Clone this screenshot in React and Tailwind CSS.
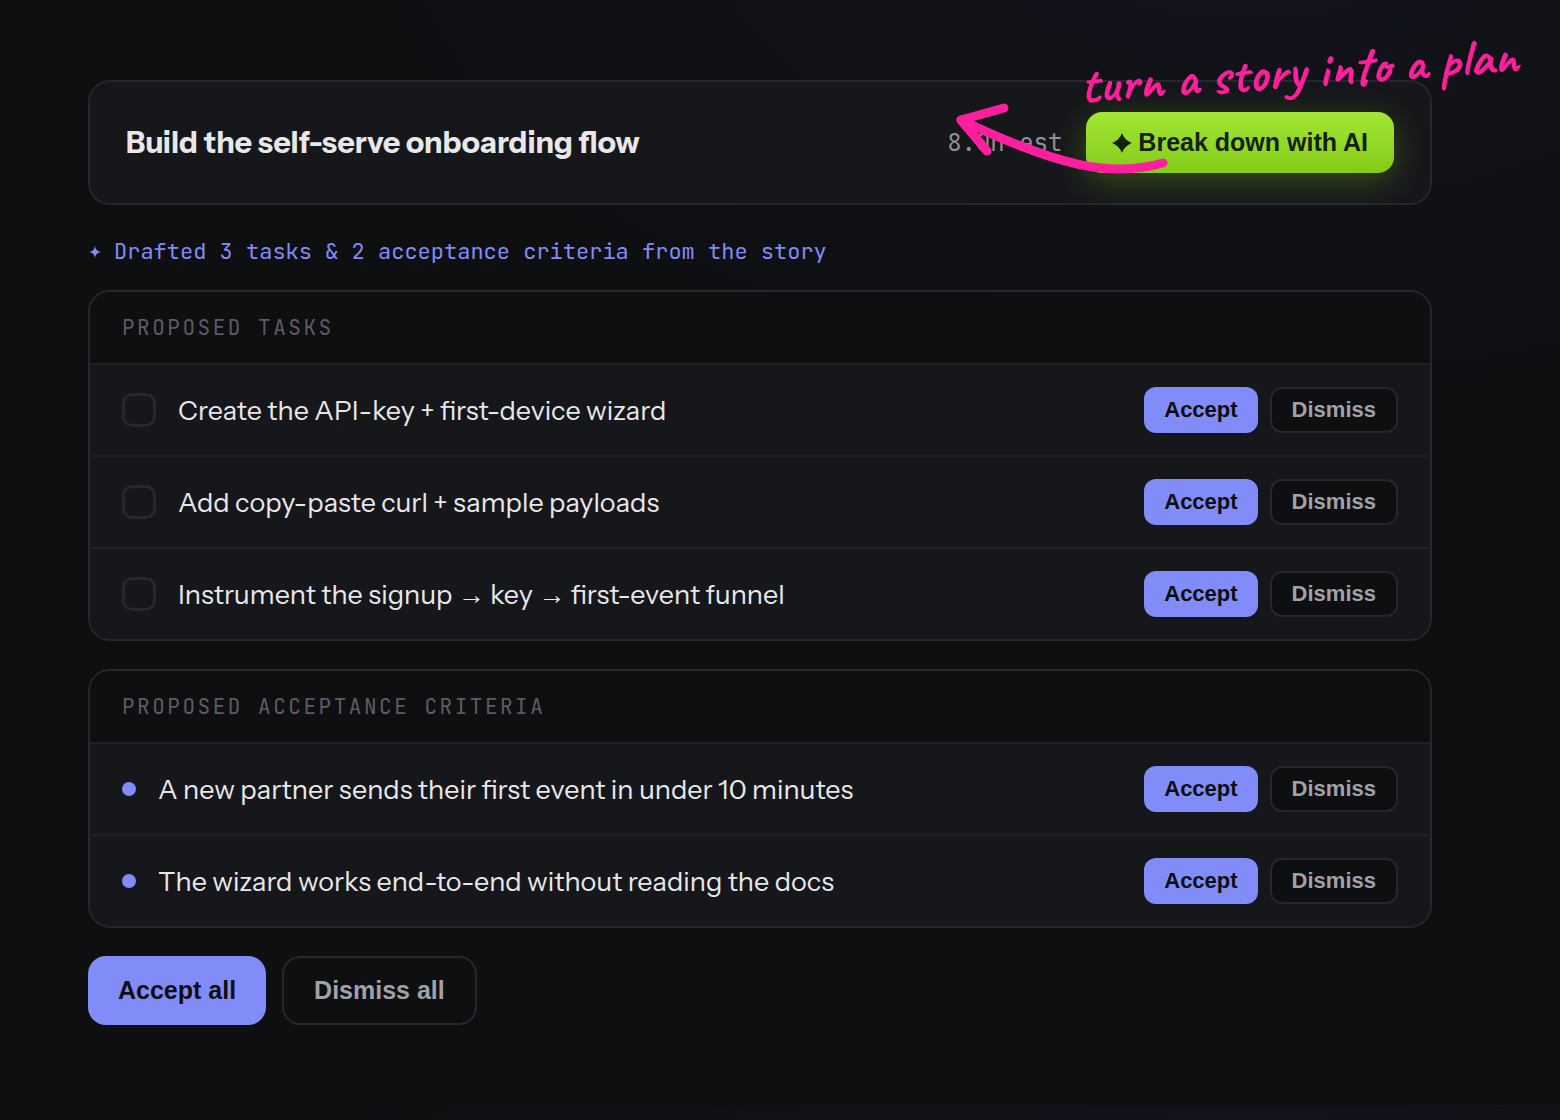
import React, { useState } from 'react';

const TASKS = [
  'Create the API-key + first-device wizard',
  'Add copy-paste curl + sample payloads',
  'Instrument the signup → key → first-event funnel',
];

const CRITERIA = [
  'A new partner sends their first event in under 10 minutes',
  'The wizard works end-to-end without reading the docs',
];

// arrows are set in the plain bold sans so their heads stay solid
const withArrows = (text) =>
  text.split(/(→)/).map((part, i) =>
    part === '→' ? (
      <span key={i} className="font-['Liberation_Sans',sans-serif] font-bold">
        {part}
      </span>
    ) : (
      part
    )
  );

const RowActions = () => (
  <div className="ml-auto flex shrink-0 gap-3 font-['Liberation_Sans',sans-serif] text-[22px] font-bold">
    <button type="button" className="h-[46px] rounded-xl bg-[#818cf8] px-5 pb-0.5 text-[#0e0f11]">
      Accept
    </button>
    <button
      type="button"
      className="h-[46px] rounded-xl border-2 border-[#26272e] bg-[#0e0f11] px-5 pb-0.5 text-[#a1a1aa]"
    >
      Dismiss
    </button>
  </div>
);

const Panel = ({ title, children }) => (
  <section className="mb-7 overflow-hidden rounded-[22px] border-2 border-[#26272e] bg-[#16171b]">
    <h2 className="bg-[#0e0f11] px-8 pt-5 pb-[19px] font-['JetBrains_Mono','DejaVu_Sans_Mono',monospace] text-[21px] leading-8 tracking-[0.12em] text-[#5b5c66] uppercase">
      {title}
    </h2>
    <ul>{children}</ul>
  </section>
);

const TaskRow = ({ id, text }) => {
  const [checked, setChecked] = useState(false);

  return (
    <li className="flex items-center border-t-2 border-[#1f2026] px-8 py-[22px]">
      <input
        id={id}
        type="checkbox"
        checked={checked}
        onChange={(e) => setChecked(e.target.checked)}
        className="size-[34px] shrink-0 appearance-none rounded-[10px] border-3 border-[#26272e] checked:bg-[#818cf8]"
      />
      <label htmlFor={id} className="ml-[22px] pt-0.5 text-[27px] leading-9">
        {withArrows(text)}
      </label>
      <RowActions />
    </li>
  );
};

const CriterionRow = ({ text }) => (
  <li className="flex items-center border-t-2 border-[#1f2026] px-8 py-[22px]">
    <span className="size-3.5 shrink-0 rounded-full bg-[#818cf8]" />
    <span className="ml-[22px] pt-0.5 text-[27px] leading-9">{text}</span>
    <RowActions />
  </li>
);

// hand-drawn note that points at the story card
const Annotation = () => (
  <div className="pointer-events-none absolute -top-[50px] -right-24 h-[150px] w-[600px] text-[#ff1f9c]">
    <p className="absolute top-1 right-2 -rotate-4 font-['Caveat','Lato',cursive] text-[54px] leading-[68px] font-bold whitespace-nowrap">
      turn a story into a plan
    </p>
    <svg
      viewBox="0 0 230 80"
      fill="none"
      stroke="currentColor"
      strokeWidth="9"
      strokeLinecap="round"
      strokeLinejoin="round"
      className="absolute top-[58px] left-3.5 h-20 w-[230px] overflow-visible"
    >
      <path d="M223 73 C170 88 118 76 21 30" />
      <path d="M64 18 L21 30 L47 61" />
    </svg>
  </div>
);

const App = () => {
  return (
    <main className="min-h-screen overflow-hidden bg-[#0e0f11] bg-[radial-gradient(1560px_900px_at_80%_-10%,rgba(99,102,241,0.055),transparent_60%)] bg-[length:100%_1105px] pt-20 pr-32 pb-20 pl-[88px] font-['Instrument_Sans','Inter',sans-serif] text-[#e8e8ea]">
      <header className="relative flex items-center rounded-[22px] border-2 border-[#26272e] bg-[#16171b] px-9 py-[30px]">
        <h1 className="text-[30px] leading-9 font-bold">Build the self-serve onboarding flow</h1>
        <span className="ml-auto font-['JetBrains_Mono','DejaVu_Sans_Mono',monospace] text-[24px] text-[#8f9098]">
          8.0h est
        </span>
        <button
          type="button"
          className="ml-6 flex h-[61px] items-center gap-1.5 rounded-2xl bg-linear-to-b from-[#a3e635] to-[#84cc16] px-[26px] font-['Liberation_Sans',sans-serif] text-[25px] font-bold text-[#16210a] shadow-[0_8px_32px_rgba(132,204,22,0.3)]"
        >
          <svg viewBox="0 0 20 20" fill="currentColor" className="size-5">
            <path d="M10 0 C12 5 15 8 20 10 C15 12 12 15 10 20 C8 15 5 12 0 10 C5 8 8 5 10 0 Z" />
          </svg>
          Break down with AI
        </button>
        <Annotation />
      </header>

      <p className="mt-[29px] mb-5 flex items-center gap-3 font-['JetBrains_Mono','DejaVu_Sans_Mono',monospace] text-[22px] leading-9 text-[#818cf8]">
        <svg viewBox="0 0 14 14" fill="currentColor" className="size-3.5">
          <path d="M7 1 C7.500 4.500 9.500 6.500 13 7 C9.500 7.500 7.500 9.500 7 13 C6.500 9.500 4.500 7.500 1 7 C4.500 6.500 6.500 4.500 7 1 Z" />
        </svg>
        Drafted 3 tasks &amp; 2 acceptance criteria from the story
      </p>

      <Panel title="Proposed tasks">
        {TASKS.map((text, i) => (
          <TaskRow key={text} id={`task-${i}`} text={text} />
        ))}
      </Panel>

      <Panel title="Proposed acceptance criteria">
        {CRITERIA.map((text) => (
          <CriterionRow key={text} text={text} />
        ))}
      </Panel>

      <div className="flex gap-4 font-['Liberation_Sans',sans-serif] text-[25px] font-bold">
        <button type="button" className="h-[69px] rounded-[18px] bg-[#818cf8] px-[30px] text-[#0e0f11]">
          Accept all
        </button>
        <button type="button" className="h-[69px] rounded-[18px] border-2 border-[#26272e] px-[30px] text-[#a1a1aa]">
          Dismiss all
        </button>
      </div>
    </main>
  );
};

export default App;
